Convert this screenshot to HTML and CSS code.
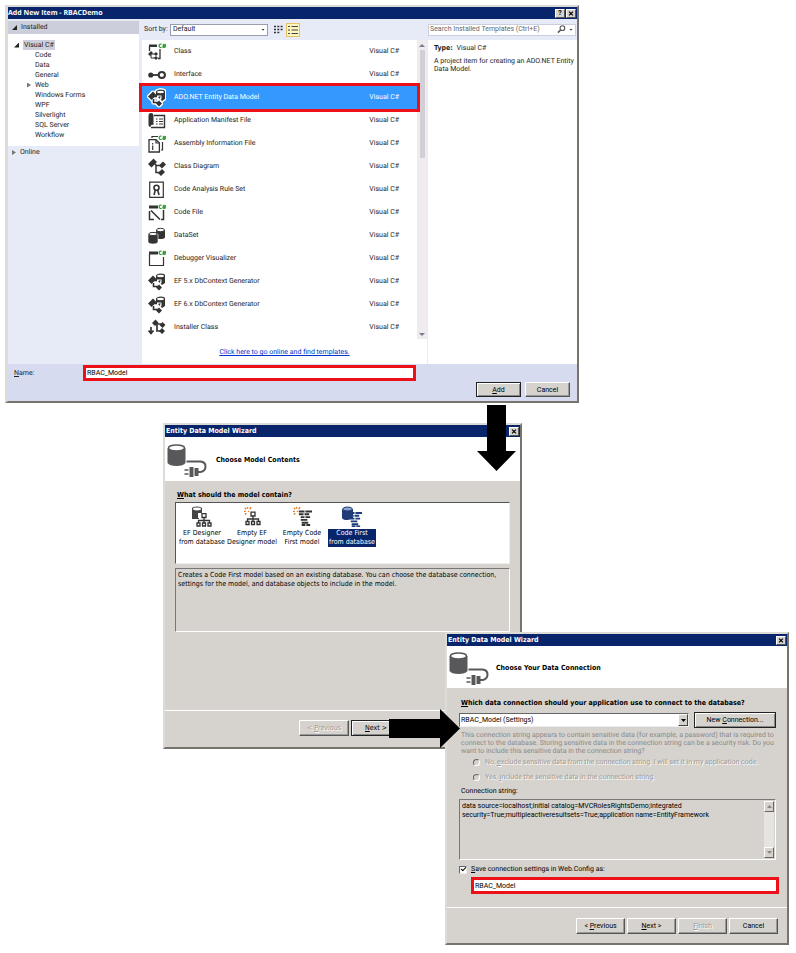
FILE: index.html
```html
<!DOCTYPE html>
<html lang="en">
<head>
<meta charset="utf-8">
<title>Add New Item - RBACDemo</title>
<link rel="stylesheet" href="styles.css">
</head>
<body>
<svg class="defs" aria-hidden="true">
  <symbol id="cs" viewBox="0 0 8 6"><path d="M3.600 1.300A1.700 1.700 0 1 0 3.600 4.300M4.600 2.100H8M4.400 3.700H7.800M5.800 .8 5.200 5M7.300 .8 6.700 5" fill="none" stroke="#2f9a2f" stroke-width="1.200"/></symbol>
  <symbol id="class" viewBox="0 0 18 18"><path d="M1.500 8V3M12 6V15.500H10" fill="none" stroke="#333" stroke-width="1.300"/><path d="M1 1.500H9V4H1Z" fill="#333"/><path d="M0 11 3 8 5 10 2 13ZM6 11 8 9 10 11 8 13ZM6 15 8 13 10 15 8 17Z" fill="#333"/><path d="M3 11H7M3 12V15H7" fill="none" stroke="#333"/><use href="#cs" x="10" y="0" width="8" height="6"/></symbol>
  <symbol id="interface" viewBox="0 0 18 18"><circle cx="2.800" cy="9" r="2.600" fill="#333"/><path d="M3 9H11" stroke="#333" stroke-width="1.800"/><circle cx="13.800" cy="9" r="3.100" fill="none" stroke="#333" stroke-width="2"/></symbol>
  <symbol id="nodes" viewBox="0 0 18 18"><path d="M0 6 5.500 .5 9 4 3.500 9.500ZM11 7.500 15 3.500 18 6.500 14 10.500ZM10 15 14 11 17 14 13 18Z" fill="#333"/><path d="M6 5 8.500 7.500H13M8 7V14.500H12" fill="none" stroke="#333" stroke-width="1.500"/></symbol>
  <symbol id="entity" viewBox="0 0 18 18"><path d="M8 3V8H10L14 12 17 10V3Z" fill="#333"/><ellipse cx="12.500" cy="3" rx="4" ry="1.800" fill="#fff" stroke="#333" stroke-width="1.200"/><path d="M9 6.500H13.500V10L11.500 11.500 9 9Z" fill="#fff"/><path d="M0 7.500 5 2.500 8.500 6 3.500 11ZM8 14.500 11 11.500 14 14.500 11 17.500ZM10 8 12.500 7 12 10Z" fill="#333"/><path d="M5 7.500H9M5.500 10V13.500H10" stroke="#333" fill="none" stroke-width="1.600"/></symbol>
  <symbol id="manifest" viewBox="0 0 18 18"><path d="M.5 4Q.5 1 3 1T5.500 4V13Q2.500 12 2.500 15Q.5 15 .5 13Z" fill="#333"/><path d="M6 3.500H16.500V15.500H3" fill="none" stroke="#333" stroke-width="1.400"/><path d="M8 7H9.500M11 7H15M8 9.500H9.500M11 9.500H15M8 12H9.500M11 12H15" stroke="#333"/></symbol>
  <symbol id="assembly" viewBox="0 0 18 18"><path d="M4 3V1.500H10M14.500 7V15H13" fill="none" stroke="#333" stroke-width="1.200"/><path d="M1 4.600H8L11.400 8V17H1Z" fill="#fff" stroke="#333" stroke-width="1.300"/><path d="M8 4.500V8H11.500M4.700 8V9.500M4.700 10.500V15" fill="none" stroke="#333" stroke-width="1.200"/><use href="#cs" x="10" y="0" width="8" height="6"/></symbol>
  <symbol id="rule" viewBox="0 0 18 18"><path d="M1.700 1.200H15.300V16.300H1.700Z" fill="#fff" stroke="#333" stroke-width="1.200"/><circle cx="8.500" cy="6.700" r="2.500" fill="none" stroke="#333" stroke-width="1.600"/><path d="M7.300 9 6 14M9.700 9 11 14" stroke="#333" stroke-width="1.600"/></symbol>
  <symbol id="codefile" viewBox="0 0 18 18"><path d="M1 1.500H10V4.500H1Z" fill="#333"/><path d="M1.500 7V15.500H6M15.500 6V15.500H13M3 6.500 12 15.500" fill="none" stroke="#333" stroke-width="1.500"/><use href="#cs" x="10" y="0" width="8" height="6"/></symbol>
  <symbol id="dataset" viewBox="0 0 18 18"><path d="M8 3V12H12Q17 12 17 10V3Z" fill="#333"/><ellipse cx="12.500" cy="3" rx="4" ry="1.700" fill="#fff" stroke="#333"/><path d="M0 7V15Q1 17 5 17T10 15V7Z" fill="#333" stroke="#fff" stroke-width=".6"/><ellipse cx="5" cy="7" rx="4.200" ry="1.600" fill="#fff" stroke="#333"/></symbol>
  <symbol id="debug" viewBox="0 0 18 18"><path d="M1 1.500H10V4.500H1Z" fill="#333"/><path d="M1.500 4V15.500H15.500V7" fill="none" stroke="#333" stroke-width="1.200"/><use href="#cs" x="10" y="0" width="8" height="6"/></symbol>
  <symbol id="installer" viewBox="0 0 18 18"><path d="M4 4 7.500 .5 10.500 3.500 7 7ZM11.500 6 14.500 3 17.500 6 14.500 9ZM11 12 14 9 17 12 14 15Z" fill="#333"/><path d="M8 5H13M9 5V12H12M3 8V14M.5 11.500 3 14.500 5.500 11.500" fill="none" stroke="#333" stroke-width="1.700"/></symbol>
  <symbol id="plug" viewBox="0 0 40 34"><path d="M0 4V19Q2 22 9 22T18 19V4Z" fill="#58585a"/><ellipse cx="9" cy="4" rx="8" ry="3" fill="#fff" stroke="#58585a" stroke-width="1.500"/><path d="M19 17.500H33Q38 18 38 22.500T33 28H30" fill="none" stroke="#58585a" stroke-width="2"/><path d="M17 26H21M17 30H21" stroke="#58585a" stroke-width="1.500"/><path d="M22 23H26V33H22ZM27 24H31V32H27Z" fill="#58585a"/></symbol>
  <symbol id="tree" viewBox="0 0 16 14"><path d="M6 .7H10V4.500H6ZM8 5V10M2.500 10V7.500H13.500V10M1 10H4V13H1ZM6.500 10H9.500V13H6.500ZM12 10H15V13H12Z" fill="#fff" stroke="#333" stroke-width="1.300"/></symbol>
  <symbol id="lines" viewBox="0 0 16 16"><path d="M2 1H8M9 1H16M2 4H7M8 4H13M4 7H8M9 7H14M4 10H11M5 13H12M5 15.500H9M10 15.500H14" stroke="currentColor" stroke-width="2"/></symbol>
  <symbol id="spark" viewBox="0 0 9 9"><path d="M4 0V2M8 0 6.500 2.500M1 1 2.500 2.500M0 5H2M1 8.500 2.500 7M4.500 4.500 5.500 5.500" stroke="#e07b1a" stroke-width="1.500"/></symbol>
  <symbol id="close" viewBox="0 0 10 9"><path d="M2.500 2 7.500 7M7.500 2 2.500 7" stroke="#000" stroke-width="1.500"/></symbol>
</svg>

<main class="desktop">
  <section class="window add-item" aria-label="Add New Item">
    <header class="titlebar"><h1>Add New Item - RBACDemo</h1><button aria-label="Help">?</button><button aria-label="Close"><svg><use href="#close"/></svg></button></header>
    <div class="add-body">
      <nav class="sidebar">
        <h2 class="group"><i class="tri open"></i>Installed</h2>
        <ul class="tree">
          <li><i class="tri open"></i><span class="current">Visual C#</span></li>
          <li class="child">Code</li>
          <li class="child">Data</li>
          <li class="child">General</li>
          <li class="child branch"><i class="tri"></i>Web</li>
          <li class="child">Windows Forms</li>
          <li class="child">WPF</li>
          <li class="child">Silverlight</li>
          <li class="child">SQL Server</li>
          <li class="child">Workflow</li>
        </ul>
        <h2 class="group online"><i class="tri"></i>Online</h2>
      </nav>
      <div class="content">
        <div class="toolbar">
          <label for="sort">Sort by:</label>
          <span class="sort-box"><select id="sort"><option>Default</option></select><i class="caret"></i></span>
          <button class="view" aria-label="Small icons"><svg viewBox="0 0 10 10"><path d="M0 1.500H9M0 4.500H9M0 7.500H6" stroke="#333" stroke-width="1.600" stroke-dasharray="2 1.300"/></svg></button>
          <button class="view active" aria-label="Medium icons"><svg viewBox="0 0 10 10"><path d="M0 1.500H2M0 5H2M0 8.500H2M3.500 1.500H10M3.500 5H10M3.500 8.500H10" stroke="#444" stroke-width="1.200"/></svg></button>
          <div class="search"><input aria-label="Search" placeholder="Search Installed Templates (Ctrl+E)"><button aria-label="Search"><svg viewBox="0 0 10 10"><circle cx="6" cy="3.500" r="2.600" fill="none" stroke="#555" stroke-width="1.200"/><path d="M4 5.500 1 8.500" stroke="#555" stroke-width="1.700"/></svg></button><i class="caret"></i></div>
        </div>
        <div class="panes">
          <div class="templates">
            <ul class="items">
              <li><svg><use href="#class"/></svg><span>Class</span><span>Visual C#</span></li>
              <li><svg><use href="#interface"/></svg><span>Interface</span><span>Visual C#</span></li>
              <li class="selected"><svg><use href="#entity" class="halo"/></svg><span>ADO.NET Entity Data Model</span><span>Visual C#</span></li>
              <li><svg><use href="#manifest"/></svg><span>Application Manifest File</span><span>Visual C#</span></li>
              <li><svg><use href="#assembly"/></svg><span>Assembly Information File</span><span>Visual C#</span></li>
              <li><svg><use href="#nodes"/></svg><span>Class Diagram</span><span>Visual C#</span></li>
              <li><svg><use href="#rule"/></svg><span>Code Analysis Rule Set</span><span>Visual C#</span></li>
              <li><svg><use href="#codefile"/></svg><span>Code File</span><span>Visual C#</span></li>
              <li><svg><use href="#dataset"/></svg><span>DataSet</span><span>Visual C#</span></li>
              <li><svg><use href="#debug"/></svg><span>Debugger Visualizer</span><span>Visual C#</span></li>
              <li><svg><use href="#entity"/></svg><span>EF 5.x DbContext Generator</span><span>Visual C#</span></li>
              <li><svg><use href="#entity"/></svg><span>EF 6.x DbContext Generator</span><span>Visual C#</span></li>
              <li><svg><use href="#installer"/></svg><span>Installer Class</span><span>Visual C#</span></li>
            </ul>
            <div class="scroll"><i class="up"></i><b></b><i class="down"></i></div>
            <p class="more"><a href="#">Click here to go online and find templates.</a></p>
          </div>
          <aside class="details">
            <p><strong>Type:</strong> Visual C#</p>
            <p>A project item for creating an ADO.NET Entity Data Model.</p>
          </aside>
        </div>
      </div>
    </div>
    <footer class="add-footer">
      <div class="name-row"><label for="name"><u>N</u>ame:</label><input id="name" class="marked" value="RBAC_Model"></div>
      <div class="actions"><button class="btn default"><u>A</u>dd</button><button class="btn">Cancel</button></div>
    </footer>
  </section>

  <section class="window contents" aria-label="Choose Model Contents">
    <header class="titlebar"><h1>Entity Data Model Wizard</h1><button aria-label="Close"><svg><use href="#close"/></svg></button></header>
    <div class="banner"><svg><use href="#plug"/></svg><h2>Choose Model Contents</h2></div>
    <div class="step">
      <h3><u>W</u>hat should the model contain?</h3>
      <ul class="choices">
        <li><svg viewBox="0 0 24 22"><path d="M2 3V13H9V9H12V3Z" fill="#444"/><ellipse cx="7" cy="3" rx="4.600" ry="2" fill="#fff" stroke="#444" stroke-width="1.200"/><path d="M8 7H19V12H8Z" fill="#fff"/><use href="#tree" x="6" y="7" width="16" height="14"/></svg><span>EF Designer<br>from database</span></li>
        <li><svg viewBox="0 0 24 22"><use href="#tree" x="5" y="5" width="16" height="15"/><use href="#spark" x="4" y="1" width="8" height="8"/></svg><span>Empty EF<br>Designer model</span></li>
        <li><svg viewBox="0 0 24 22"><use href="#lines" x="7" y="4" width="15" height="16"/><use href="#spark" x="3" y="1" width="8" height="8"/></svg><span>Empty Code<br>First model</span></li>
        <li class="picked"><svg viewBox="0 0 24 22"><path d="M2 3V12Q3 14 7 14T13 12V3Z" fill="#1f3c78"/><ellipse cx="7.500" cy="3" rx="4.800" ry="2" fill="#8da2cc" stroke="#1f3c78"/><use href="#lines" x="7" y="6" width="15" height="15"/></svg><span>Code First<br>from database</span></li>
      </ul>
      <p class="summary">Creates a Code First model based on an existing database. You can choose the database connection, settings for the model, and database objects to include in the model.</p>
    </div>
    <footer class="actions"><button class="btn" disabled>&lt; <u>P</u>revious</button><button class="btn default"><u>N</u>ext &gt;</button></footer>
  </section>

  <section class="window connection" aria-label="Choose Your Data Connection">
    <header class="titlebar"><h1>Entity Data Model Wizard</h1><button aria-label="Close"><svg><use href="#close"/></svg></button></header>
    <div class="banner"><svg><use href="#plug"/></svg><h2>Choose Your Data Connection</h2></div>
    <div class="step">
      <h3><label for="conn"><u>W</u>hich data connection should your application use to connect to the database?</label></h3>
      <div class="pick"><span class="combo"><select id="conn"><option>RBAC_Model (Settings)</option></select><i class="drop"></i></span><button class="btn default">New <u>C</u>onnection...</button></div>
      <p class="muted">This connection string appears to contain sensitive data (for example, a password) that is required to connect to the database. Storing sensitive data in the connection string can be a security risk. Do you want to include this sensitive data in the connection string?</p>
      <label class="radio"><input type="radio" name="s" disabled><span>No, <u>e</u>xclude sensitive data from the connection string. I will set it in my application code.</span></label>
      <label class="radio"><input type="radio" name="s" disabled><span>Yes, <u>i</u>nclude the sensitive data in the connection string.</span></label>
      <label class="caption" for="str">Connection string:</label>
      <div class="string"><textarea id="str" readonly>data source=localhost;initial catalog=MVCRolesRightsDemo;integrated security=True;multipleactiveresultsets=True;application name=EntityFramework</textarea><div class="oldscroll"><i class="up"></i><i class="down"></i></div></div>
      <label class="save"><input type="checkbox" checked><span><u>S</u>ave connection settings in Web.Config as:</span></label>
      <input class="marked" aria-label="Connection settings name" value="RBAC_Model">
    </div>
    <footer class="actions"><button class="btn">&lt; <u>P</u>revious</button><button class="btn"><u>N</u>ext &gt;</button><button class="btn" disabled><u>F</u>inish</button><button class="btn">Cancel</button></footer>
  </section>

  <svg class="arrow down-arrow" viewBox="0 0 40 66"><path d="M10 0H29V46H39L19.500 66 0 46H10Z"/></svg>
  <svg class="arrow right-arrow" viewBox="0 0 71 39"><path d="M0 10H51V0L71 19.500 51 39V29H0Z"/></svg>
</main>
</body>
</html>
```
FILE: styles.css
```css
* { box-sizing: border-box; }
body { margin: 0; background: #fff; color: #1e1e1e; font: 7px/9px "DejaVu Sans Condensed", "DejaVu Sans", sans-serif; text-rendering: geometricPrecision; }
h1, h2, h3, p, ul { margin: 0; padding: 0; font-size: inherit; list-style: none; }
button, input, select, textarea { font: inherit; color: inherit; margin: 0; padding: 0; border: 0; border-radius: 0; background: none; outline: none; appearance: none; }
i { display: block; flex: none; }
svg { display: block; flex: none; }
.defs { position: absolute; width: 0; height: 0; }
.desktop { position: relative; min-height: 953px; }

.window { position: absolute; background: #d6d3ce; border: 2px solid; border-color: #dddbd6 #77736d #77736d #dddbd6; color: #000; }
.add-item { left: 5px; top: 5px; width: calc(100% - 222px); border-left-width: 3px; font-family: Roboto, "Liberation Sans", sans-serif; }
.contents { left: 163px; top: 423px; width: calc(100% - 437px); }
.connection { left: 445px; top: 632px; width: calc(100% - 452px); font-family: Roboto, "Liberation Sans", sans-serif; }

.titlebar { display: flex; align-items: center; gap: 1px; height: 12px; padding-right: 1px; background: #08246b; color: #fff; }
.titlebar h1 { flex: 1; padding-left: 1px; font-weight: bold; }
.titlebar button { width: 10px; height: 9px; background: #d6d3ce; border: 1px solid; border-color: #fff #555 #555 #fff; color: #000; font-weight: bold; line-height: 7px; }
.titlebar svg { width: 8px; height: 7px; }
.add-item .titlebar h1 { padding-left: 0; font-family: "Open Sans", sans-serif; }
.details strong, .connection h1, .connection h2, .connection h3 { font-family: "DejaVu Sans Condensed", "DejaVu Sans", sans-serif; }

.add-body { display: flex; background: #e6ebf7; color: #1e1e1e; }
.sidebar { flex: none; width: 134px; padding: 2px 3px 0 0; }
.group { display: flex; align-items: center; gap: 4px; height: 13px; padding-left: 4px; background: #cccedb; font-weight: normal; }
.online { background: none; }
.tree { height: 112px; padding: 6px 0 0 6px; background: #fff; }
.tree li { display: flex; align-items: center; gap: 4px; height: 10px; }
.tree .child { padding-left: 21px; }
.tree .branch { padding-left: 13px; gap: 4px; }
.current { padding: 0 1px; line-height: 10px; background: #cccedb; }
.tri { width: 4px; height: 5px; background: #777; clip-path: polygon(0 0, 100% 50%, 0 100%); }
.tri.open { width: 5px; background: #222; clip-path: polygon(100% 0, 100% 100%, 0 100%); }

.content { flex: 1; min-width: 0; }
.toolbar { display: flex; align-items: center; height: 21px; padding: 0 1px 0 2px; }
.toolbar label { width: 24px; white-space: nowrap; }
.sort-box { position: relative; width: 98px; margin: 0 4px 0 2px; }
.sort-box select { display: block; width: 100%; height: 12px; padding-left: 2px; background: #fff; border: 1px solid #999ead; }
.caret { width: 4px; height: 2px; background: #222; clip-path: polygon(0 0, 100% 0, 50% 100%); }
.sort-box .caret { position: absolute; right: 3px; top: 5px; }
.view { width: 14px; height: 14px; padding: 2px; }
.view svg { width: 10px; height: 10px; }
.view.active { background: #fdf4bf; border: 1px solid #e5c365; padding: 1px; }
.search { display: flex; align-items: center; width: 148px; height: 12px; margin-left: auto; padding-right: 2px; background: #fff; border: 1px solid #cccedb; }
.search input { flex: 1; min-width: 0; padding-left: 1px; }
.search input::placeholder { color: #666; opacity: 1; }
.search button svg { width: 9px; height: 9px; margin-right: 3px; }
.panes { display: grid; grid-template-columns: 1fr 149px; gap: 1px; }
.templates { display: grid; grid-template-columns: 1fr 10px; background: #fff; }
.items li { position: relative; display: flex; align-items: center; height: 23px; padding: 0 18px 0 6px; }
.items svg { width: 18px; height: 18px; margin-right: 8px; overflow: visible; }
.items span:last-child { margin-left: auto; }
.items .selected { z-index: 1; background: #3399ff; color: #fff; outline: 3px solid #ee1018; }
.halo { filter: drop-shadow(1px 0 0 #fff) drop-shadow(-1px 0 0 #fff) drop-shadow(0 1px 0 #fff) drop-shadow(0 -1px 0 #fff); }
.scroll { display: flex; flex-direction: column; align-items: center; padding: 4px 0 3px; background: #efebef; }
.scroll b { width: 5px; height: 108px; margin-top: 3px; background: #d2d0d6; }
.up { width: 6px; height: 3px; background: #777c90; clip-path: polygon(50% 0, 100% 100%, 0 100%); }
.down { width: 6px; height: 3px; background: #777c90; clip-path: polygon(0 0, 100% 0, 50% 100%); }
.scroll .down { margin-top: auto; }
.more { grid-column: 1 / 3; height: 25px; padding-top: 9px; text-align: center; }
.more a { color: #0033cc; }
.details { padding: 4px 0 4px 6px; background: #fff; }
.details p + p { margin-top: 4px; line-height: 8px; }
.details strong { margin-right: 2px; }

.add-footer { padding: 1px 7px 4px 6px; background: #d6dbef; color: #1e1e1e; }
.name-row { display: flex; align-items: center; }
.name-row label { width: 69px; }
.name-row input { width: 333px; }
.marked { height: 16px; padding-left: 1px; background: #fff; border: 3px solid #ee1018; color: #000; }
.actions { display: flex; justify-content: flex-end; }
.add-footer .actions { gap: 4px; margin-top: 1px; }
.btn { height: 15px; background: #d6d3ce; border: 1px solid; border-color: #fff #555 #555 #fff; box-shadow: inset -1px -1px #999; color: #000; line-height: 12px; }
.btn.default { border-color: #222; box-shadow: inset 1px 1px #fff, inset -1px -1px #888; }
.btn:disabled { color: #999; text-shadow: 1px 1px #fff; }
.add-footer .btn { width: 45px; }

.banner { display: flex; align-items: center; height: 44px; padding: 3px 0 0 2px; background: #fff; }
.banner svg { width: 41px; height: 34px; }
.banner h2 { margin-left: 8px; }
.step { padding: 10px 10px 0; }
.contents .step { height: 230px; border-bottom: 1px solid #fff; }
.step h3 { padding-left: 2px; }
.choices { display: flex; height: 62px; margin-top: 2px; padding: 3px 1px 0; background: #fff; border: 1px solid; border-color: #555 #eee #eee #555; }
.choices li { display: flex; flex-direction: column; align-items: center; width: 50px; text-align: center; white-space: nowrap; }
.choices svg { width: 24px; height: 22px; margin-bottom: 1px; color: #333; }
.choices span { line-height: 9px; }
.choices .picked { color: #fff; }
.picked svg { color: #1f3c78; }
.picked span { padding: 0 1px; background: #08246b; }
.summary { height: 64px; margin-top: 4px; padding: 2px; line-height: 9px; border: 1px solid; border-color: #777 #fff #fff #777; }
.contents .actions { justify-content: flex-start; gap: 2px; padding: 9px 0 11px 134px; }
.contents .btn { width: 50px; height: 16px; }

.connection .banner { height: 42px; }
.connection .banner h2 { margin-left: 6px; }
.connection .step { padding: 11px 8px 13px 12px; border-bottom: 1px solid #fff; }
.connection h3 { padding-left: 2px; }
.pick { display: flex; align-items: center; gap: 5px; margin-top: 4px; padding-right: 3px; }
.pick .btn { width: 82px; }
.combo { position: relative; flex: 1; }
.combo select { display: block; width: 100%; height: 14px; padding-left: 1px; background: #fff; border: 1px solid; border-color: #666 #eee #eee #666; }
.drop { position: absolute; right: 1px; top: 1px; width: 10px; height: 12px; background: #d6d3ce; border: 1px solid; border-color: #fff #444 #444 #fff; }
.drop::after { content: ""; position: absolute; left: 2px; top: 4px; width: 5px; height: 3px; background: #000; clip-path: polygon(0 0, 100% 0, 50% 100%); }
.muted { margin-top: 3px; padding-left: 2px; line-height: 8px; color: #8a8a8a; }
.radio { display: flex; align-items: center; gap: 5px; height: 15px; padding-left: 14px; color: #999; text-shadow: 1px 1px #fff; }
.radio input { width: 7px; height: 7px; border: 1px solid; border-color: #666 #fff #fff #666; border-radius: 50%; }
.caption { display: block; margin-top: 2px; padding-left: 2px; }
.string { display: flex; height: 61px; margin: 3px 3px 0 0; padding: 1px; border: 1px solid; border-color: #777 #fff #fff #777; }
.string textarea { flex: 1; resize: none; padding: 1px 1px; overflow: hidden; }
.oldscroll { display: flex; flex-direction: column; justify-content: space-between; width: 10px; background: #e6e4e0; }
.oldscroll i { width: 10px; height: 11px; background: #d6d3ce; border: 1px solid; border-color: #fff #666 #666 #fff; clip-path: none; position: relative; }
.oldscroll i::after { content: ""; position: absolute; left: 2px; top: 3px; width: 5px; height: 3px; background: #888; }
.oldscroll .up::after { clip-path: polygon(50% 0, 100% 100%, 0 100%); }
.oldscroll .down::after { clip-path: polygon(0 0, 100% 0, 50% 100%); }
.save { display: flex; align-items: center; gap: 4px; height: 9px; margin-top: 5px; }
.save input { width: 8px; height: 8px; background: #fff; border: 1px solid; border-color: #666 #eee #eee #666; position: relative; }
.save input:checked::after { content: ""; position: absolute; left: 1px; top: 0; width: 4px; height: 2px; border: solid #000; border-width: 0 0 1px 1px; transform: rotate(-45deg); }
.connection .marked { display: block; width: calc(100% - 12px); height: 17px; margin: 3px 0 0 12px; }
.connection .actions { gap: 2px; padding: 10px 9px 9px 0; }
.connection .btn { height: 16px; }
.connection .actions .btn { width: 49px; }

.arrow { position: absolute; fill: #000; }
.down-arrow { left: 477px; top: 405px; width: 40px; height: 66px; }
.right-arrow { left: 389px; top: 709px; width: 71px; height: 39px; }
```
